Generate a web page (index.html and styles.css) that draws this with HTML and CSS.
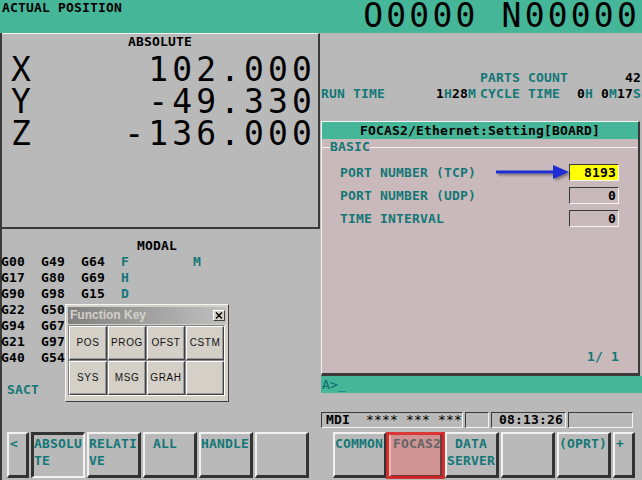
FILE: index.html
```html
<!DOCTYPE html>
<html lang="en">
<head>
<meta charset="utf-8">
<title>Actual Position</title>
<link rel="stylesheet" href="styles.css">
</head>
<body>
<div class="screen">
  <header class="topbar">
    <div class="topbar-title">ACTUAL POSITION</div>
    <div class="prog">O0000 N00000</div>
  </header>
  <div class="body">
    <div class="main">
      <section class="left">
        <div class="abs-box">
          <div class="abs-title">ABSOLUTE</div>
          <div class="axes">
            <div class="axis"><span>X</span><span>102.000</span></div>
            <div class="axis"><span>Y</span><span>-49.330</span></div>
            <div class="axis"><span>Z</span><span>-136.000</span></div>
          </div>
        </div>
        <div class="modal">
          <div class="modal-title">MODAL</div>
          <div class="grow"><span>G00</span><span>G49</span><span>G64</span><span class="t">F</span><span class="t">M</span></div>
          <div class="grow"><span>G17</span><span>G80</span><span>G69</span><span class="t">H</span></div>
          <div class="grow"><span>G90</span><span>G98</span><span>G15</span><span class="t">D</span></div>
          <div class="grow"><span>G22</span><span>G50</span></div>
          <div class="grow"><span>G94</span><span>G67</span></div>
          <div class="grow"><span>G21</span><span>G97</span></div>
          <div class="grow"><span>G40</span><span>G54</span></div>
          <div class="sact">SACT</div>
        </div>
      </section>
      <section class="right">
        <div class="stats">
          <div class="stat-row1"><span class="t">PARTS COUNT</span><span class="push">42</span></div>
          <div class="stat-row2">
            <span class="t">RUN TIME</span>
            <span class="num">1<span class="t">H</span>28<span class="t">M</span></span>
            <span class="t cyc">CYCLE TIME</span>
            <span class="num">0<span class="t">H</span> 0<span class="t">M</span>17<span class="t">S</span></span>
          </div>
        </div>
        <div class="panel">
          <div class="panel-head">FOCAS2/Ethernet:Setting[BOARD]</div>
          <div class="legend">BASIC</div>
          <div class="fields">
            <div class="field"><span>PORT NUMBER (TCP)</span><span class="val val-hi">8193</span></div>
            <div class="field"><span>PORT NUMBER (UDP)</span><span class="val">0</span></div>
            <div class="field"><span>TIME INTERVAL</span><span class="val">0</span></div>
          </div>
          <div class="pager">1/ 1</div>
        </div>
        <div class="input-bar">A&gt;_</div>
      </section>
    </div>
    <div class="status">
      <div class="sbox sbox-mode">MDI  <span class="thin">**** *** ***</span></div>
      <div class="sbox sbox-s"></div>
      <div class="sbox sbox-time">08:13:26</div>
      <div class="sbox sbox-last"></div>
    </div>
    <div class="softkeys">
      <div class="key key-narrow">&lt;</div>
      <div class="key key-down">ABSOLU<br>TE</div>
      <div class="key">RELATI<br>VE</div>
      <div class="key"><span class="ind">ALL</span></div>
      <div class="key">HANDLE</div>
      <div class="key"></div>
      <div class="key-gap"></div>
      <div class="key">COMMON</div>
      <div class="key key-mark"><span class="ind-half">FOCAS2</span><span class="mark"></span></div>
      <div class="key"><span class="ind">DATA</span><br>SERVER</div>
      <div class="key"></div>
      <div class="key">(OPRT)</div>
      <div class="key key-narrow">+</div>
    </div>
  </div>

  <svg class="arrow" width="78" height="22" viewBox="0 0 78 22">
    <line x1="2" y1="10" x2="62" y2="10" stroke="#1e2ed2" stroke-width="3"/>
    <polygon points="59,3 75,10 59,17" fill="#1e2ed2"/>
  </svg>

  <div class="fk-window">
    <div class="fk-title">
      <span>Function Key</span>
      <span class="fk-close"><svg width="8" height="7" viewBox="0 0 8 7"><path d="M1 0.5 L7 6.5 M7 0.5 L1 6.5" stroke="#000" stroke-width="1.4"/></svg></span>
    </div>
    <div class="fk-grid">
      <div class="fk-btn">POS</div>
      <div class="fk-btn">PROG</div>
      <div class="fk-btn">OFST</div>
      <div class="fk-btn">CSTM</div>
      <div class="fk-btn">SYS</div>
      <div class="fk-btn">MSG</div>
      <div class="fk-btn">GRAH</div>
      <div class="fk-btn"></div>
    </div>
  </div>
</div>
</body>
</html>
```

FILE: styles.css
```css
* { box-sizing: border-box; margin: 0; padding: 0; }

html, body {
  width: 642px;
  height: 480px;
  overflow: hidden;
  background: #b9b9b9;
}

body {
  font: bold 13px/16px "DejaVu Sans Mono", monospace;
  letter-spacing: 0.17px;
  color: #000;
}

.t { color: #127777; }

.screen {
  position: relative;
  width: 642px;
  height: 480px;
  display: flex;
  flex-direction: column;
}

/* top bar */
.topbar {
  flex: none;
  height: 33px;
  background: #46b698;
  display: flex;
  justify-content: space-between;
  align-items: flex-start;
}
.topbar-title { padding-left: 2px; }
.prog {
  font: 400 33px/32px "DejaVu Sans Mono", monospace;
  letter-spacing: 3.2px;
  margin-right: 2px;
  white-space: pre;
}

.body {
  flex: 1;
  display: flex;
  flex-direction: column;
  border-left: 2px solid #3a3a3a;
}

.main {
  flex: none;
  height: 379px;
  display: flex;
}

/* left column */
.left { flex: none; width: 319px; }

.abs-box {
  width: 318px;
  height: 196px;
  border-top: 1px solid #f2f2f2;
  border-right: 2px solid #3a3a3a;
  border-bottom: 2px solid #3a3a3a;
}
.abs-title { text-align: center; }
.axes { margin-top: 4px; }
.axis {
  display: flex;
  justify-content: space-between;
  height: 32px;
  padding-left: 9px;
  padding-right: 2px;
  font: 400 33px/32px "DejaVu Sans Mono", monospace;
  letter-spacing: 4.1px;
}

.modal { padding-top: 9px; }
.modal-title { padding-left: 135px; }
.grow {
  display: grid;
  grid-template-columns: 40px 40px 40px 72px auto;
  margin-left: -1px;
}
.sact {
  margin-top: 16px;
  padding-left: 5px;
  color: #127777;
}

/* right column */
.right {
  flex: none;
  width: 321px;
  display: flex;
  flex-direction: column;
}

.stats { height: 88px; padding-top: 37px; }
.stat-row1 { display: flex; padding-left: 159px; padding-right: 1px; }
.push { margin-left: auto; }
.stat-row2 {
  display: grid;
  grid-template-columns: 80px 75px 1fr auto;
  padding-right: 1px;
}
.num { text-align: right; }
.cyc { padding-left: 4px; }

.panel {
  width: 319px;
  height: 255px;
  background: #cab9ba;
  border-top: 1px solid #f4f4f4;
  border-left: 1px solid #f4f4f4;
  border-right: 2px solid #3a3a3a;
  border-bottom: 3px solid #3a3a3a;
  display: flex;
  flex-direction: column;
}
.panel-head {
  height: 17px;
  line-height: 17px;
  background: #46b698;
  text-align: center;
}
.legend {
  display: flex;
  align-items: center;
  height: 16px;
  color: #127777;
}
.legend::before {
  content: "";
  width: 8px;
  height: 1px;
  background: #f4f4f4;
}
.legend::after {
  content: "";
  flex: 1;
  height: 1px;
  background: #f4f4f4;
}
.fields {
  display: flex;
  flex-direction: column;
  gap: 6px;
  padding: 9px 19px 0 18px;
}
.field {
  display: flex;
  justify-content: space-between;
  height: 17px;
  line-height: 17px;
  color: #127777;
}
.val {
  width: 50px;
  height: 17px;
  line-height: 15px;
  border: 1px solid;
  border-color: #3a3a3a #f4f4f4 #f4f4f4 #3a3a3a;
  text-align: right;
  padding-right: 2px;
  color: #000;
}
.val-hi { background: #ffff00; }
.pager {
  margin-top: auto;
  padding: 0 19px 8px 0;
  text-align: right;
  color: #127777;
}

.input-bar {
  height: 17px;
  line-height: 17px;
  background: #46b698;
  color: #0b6c6c;
  font-weight: 400;
  padding-left: 1px;
}

/* status row */
.status {
  flex: none;
  height: 16px;
  display: flex;
  gap: 2px;
  padding-left: 319px;
}
.sbox {
  height: 16px;
  line-height: 14px;
  border: 1px solid;
  border-color: #3a3a3a #f4f4f4 #f4f4f4 #3a3a3a;
  white-space: pre;
  padding-left: 4px;
}
.sbox-mode { width: 142px; }
.sbox-s { width: 24px; }
.sbox-time { width: 75px; padding-left: 7px; }
.sbox-last { width: 65px; }
.thin { font-weight: 400; }

/* soft keys */
.softkeys {
  flex: none;
  margin-top: 4px;
  height: 46px;
  display: flex;
  gap: 2px;
  padding-left: 5px;
}
.key {
  position: relative;
  width: 54px;
  height: 46px;
  border: 2px solid;
  border-color: #f2f2f2 #333 #333 #f2f2f2;
  border-right-width: 3px;
  border-bottom-width: 3px;
  color: #127777;
  line-height: 17px;
  padding-top: 1px;
}
.key-narrow { width: 22px; padding-left: 1px; }
.key-down {
  border-color: #333 #f2f2f2 #f2f2f2 #333;
  border-width: 3px 2px 2px 3px;
  padding-top: 0;
}
.key-gap { width: 20px; }
.ind { padding-left: 8px; }
.ind-half { padding-left: 2px; }
.mark {
  position: absolute;
  left: -5px;
  top: -2px;
  width: 59px;
  height: 47px;
  border: 3px solid rgba(215, 35, 35, 0.85);
  background: rgba(255, 70, 70, 0.33);
}

/* annotation arrow */
.arrow {
  position: absolute;
  left: 494px;
  top: 162px;
  filter: drop-shadow(2px 2px 1px rgba(0, 0, 0, 0.35));
}

/* floating function key window */
.fk-window {
  position: absolute;
  left: 65px;
  top: 304px;
  width: 164px;
  height: 98px;
  background: #d4d0c8;
  border: 1px solid;
  border-color: #f4f4f4 #404040 #404040 #f4f4f4;
  padding: 2px;
  font-family: "Liberation Sans", Arial, sans-serif;
  letter-spacing: 0;
}
.fk-title {
  height: 17px;
  background: linear-gradient(to right, #808080, #c0c0c0);
  color: #d4d0c8;
  font: bold 12px/17px "Liberation Sans", Arial, sans-serif;
  padding-left: 2px;
  display: flex;
  justify-content: space-between;
  align-items: center;
}
.fk-close {
  width: 12px;
  height: 11px;
  margin-right: 1px;
  background: #d4d0c8;
  border: 1px solid;
  border-color: #fff #404040 #404040 #fff;
  display: flex;
  align-items: center;
  justify-content: center;
}
.fk-close svg { display: block; }
.fk-grid {
  margin-top: 1px;
  width: 157px;
  display: grid;
  grid-template-columns: repeat(4, 38px);
  grid-auto-rows: 34px;
  gap: 1px;
  background: #8a8a8a;
  border: 1px solid;
  border-color: #808080 #fff #fff #808080;
}
.fk-btn {
  background: #d4d0c8;
  border: 1px solid;
  border-color: #fff #404040 #404040 #fff;
  box-shadow: inset -1px -1px #9a9a9a;
  display: flex;
  align-items: center;
  justify-content: center;
  font: 400 10px/1 "Liberation Sans", Arial, sans-serif;
  letter-spacing: 0.6px;
  color: #111;
}
```
